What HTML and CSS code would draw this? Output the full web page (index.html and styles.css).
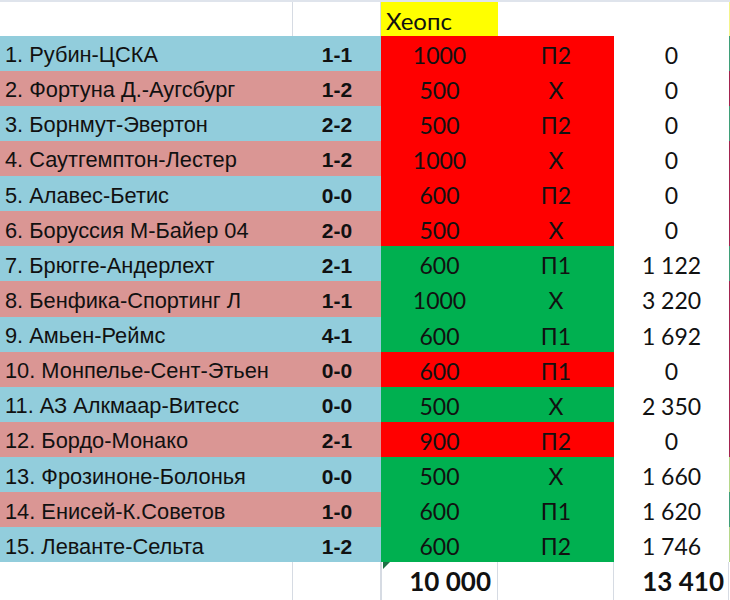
FILE: index.html
```html
<!DOCTYPE html>
<html lang="ru">
<head>
<meta charset="utf-8">
<link rel="stylesheet" href="styles.css">
</head>
<body>
<div class="sheet">
  <div class="row head">
    <div class="c a"></div><div class="c b"></div>
    <div class="c amt yel">Хеопс</div><div class="c out"></div><div class="c win"></div><div class="c edge s-yel"></div>
  </div>
  <div class="row blue"><div class="c a">1. Рубин-ЦСКА</div><div class="c b">1-1</div><div class="c amt red">1000</div><div class="c out red">П2</div><div class="c win">0</div><div class="c edge s-grn"></div></div>
  <div class="row pink"><div class="c a">2. Фортуна Д.-Аугсбург</div><div class="c b">1-2</div><div class="c amt red">500</div><div class="c out red">Х</div><div class="c win">0</div><div class="c edge s-crm"></div></div>
  <div class="row blue"><div class="c a">3. Борнмут-Эвертон</div><div class="c b">2-2</div><div class="c amt red">500</div><div class="c out red">П2</div><div class="c win">0</div><div class="c edge s-grn"></div></div>
  <div class="row pink"><div class="c a">4. Саутгемптон-Лестер</div><div class="c b">1-2</div><div class="c amt red">1000</div><div class="c out red">Х</div><div class="c win">0</div><div class="c edge s-crm"></div></div>
  <div class="row blue"><div class="c a">5. Алавес-Бетис</div><div class="c b">0-0</div><div class="c amt red">600</div><div class="c out red">П2</div><div class="c win">0</div><div class="c edge s-crm"></div></div>
  <div class="row pink"><div class="c a">6. Боруссия М-Байер 04</div><div class="c b">2-0</div><div class="c amt red">500</div><div class="c out red">Х</div><div class="c win">0</div><div class="c edge s-crm"></div></div>
  <div class="row blue"><div class="c a">7. Брюгге-Андерлехт</div><div class="c b">2-1</div><div class="c amt grn">600</div><div class="c out grn">П1</div><div class="c win">1 122</div><div class="c edge s-grn"></div></div>
  <div class="row pink"><div class="c a">8. Бенфика-Спортинг Л</div><div class="c b">1-1</div><div class="c amt grn">1000</div><div class="c out grn">Х</div><div class="c win">3 220</div><div class="c edge s-crm"></div></div>
  <div class="row blue"><div class="c a">9. Амьен-Реймс</div><div class="c b">4-1</div><div class="c amt grn">600</div><div class="c out grn">П1</div><div class="c win">1 692</div><div class="c edge s-crm"></div></div>
  <div class="row pink"><div class="c a">10. Монпелье-Сент-Этьен</div><div class="c b">0-0</div><div class="c amt red">600</div><div class="c out red">П1</div><div class="c win">0</div><div class="c edge s-crm"></div></div>
  <div class="row blue"><div class="c a">11. АЗ Алкмаар-Витесс</div><div class="c b">0-0</div><div class="c amt grn">500</div><div class="c out grn">Х</div><div class="c win">2 350</div><div class="c edge s-crm"></div></div>
  <div class="row pink"><div class="c a">12. Бордо-Монако</div><div class="c b">2-1</div><div class="c amt red">900</div><div class="c out red">П2</div><div class="c win">0</div><div class="c edge s-crm"></div></div>
  <div class="row blue"><div class="c a">13. Фрозиноне-Болонья</div><div class="c b">0-0</div><div class="c amt grn">500</div><div class="c out grn">Х</div><div class="c win">1 660</div><div class="c edge s-lgr"></div></div>
  <div class="row pink"><div class="c a">14. Енисей-К.Советов</div><div class="c b">1-0</div><div class="c amt grn">600</div><div class="c out grn">П1</div><div class="c win">1 620</div><div class="c edge s-grn"></div></div>
  <div class="row blue"><div class="c a">15. Леванте-Сельта</div><div class="c b">1-2</div><div class="c amt grn">600</div><div class="c out grn">П2</div><div class="c win">1 746</div><div class="c edge s-lgr"></div></div>
  <div class="row foot">
    <div class="c a"></div><div class="c b"></div>
    <div class="c amt total"><span class="flag"></span>10 000</div><div class="c out"></div><div class="c win total">13 410</div><div class="c edge"></div>
  </div>
</div>
</body>
</html>
```

FILE: styles.css
```css
html, body {
  margin: 0;
  padding: 0;
  background: #ffffff;
}
.sheet {
  width: 730px;
  height: 600px;
  display: flex;
  flex-direction: column;
  border-top: 2px solid #dfe4ec;
  box-sizing: border-box;
  overflow: hidden;
}
.row {
  display: grid;
  grid-template-columns: 293px 88px 117px 116px 115px 1fr;
  height: 35.13px;
  flex: none;
}
.row.head {
  height: 33.5px;
}
.row.foot {
  flex: 1 1 auto;
  height: auto;
}
.c {
  display: flex;
  align-items: center;
  padding-top: 3px;
  box-sizing: border-box;
  color: #111;
  white-space: nowrap;
  overflow: hidden;
}
.a {
  font-family: "Liberation Sans", Arial, sans-serif;
  font-size: 21.8px;
  padding-left: 5px;
  padding-top: 4px;
}
.b {
  font-family: "Liberation Sans", Arial, sans-serif;
  font-weight: bold;
  font-size: 21px;
  justify-content: center;
  padding-top: 4px;
}
.amt, .out, .win {
  font-family: Lato, "Open Sans", sans-serif;
  font-size: 23px;
  justify-content: center;
}
.blue .a, .blue .b { background: #92cddc; }
.pink .a, .pink .b { background: #da9694; }
.red { background: #ff0000; }
.grn { background: #00b050; }
.yel {
  background: #ffff00;
  justify-content: flex-start;
  padding-left: 5px;
  font-size: 24px;
}
.head .a, .foot .a, .head .b, .foot .b {
  border-right: 1px solid #d6dbe3;
}
.foot .amt, .foot .out, .foot .win {
  border-right: 1px solid #d6dbe3;
}
.foot .amt { border-left: 1px solid #d6dbe3; }
.total {
  font-weight: bold;
  font-size: 26px;
  justify-content: flex-end;
  position: relative;
  padding-right: 6px;
  padding-top: 0;
}
.win.total { padding-right: 4px; }
.flag {
  position: absolute;
  left: 1px;
  top: 0;
  width: 0;
  height: 0;
  border-top: 7px solid #1e7145;
  border-right: 7px solid transparent;
}
.edge { padding: 0; }
.s-yel { background: #f4f48a; }
.s-grn { background: #3f9e78; }
.s-crm { background: #a3234f; }
.s-lgr { background: #b5d88a; }
```
